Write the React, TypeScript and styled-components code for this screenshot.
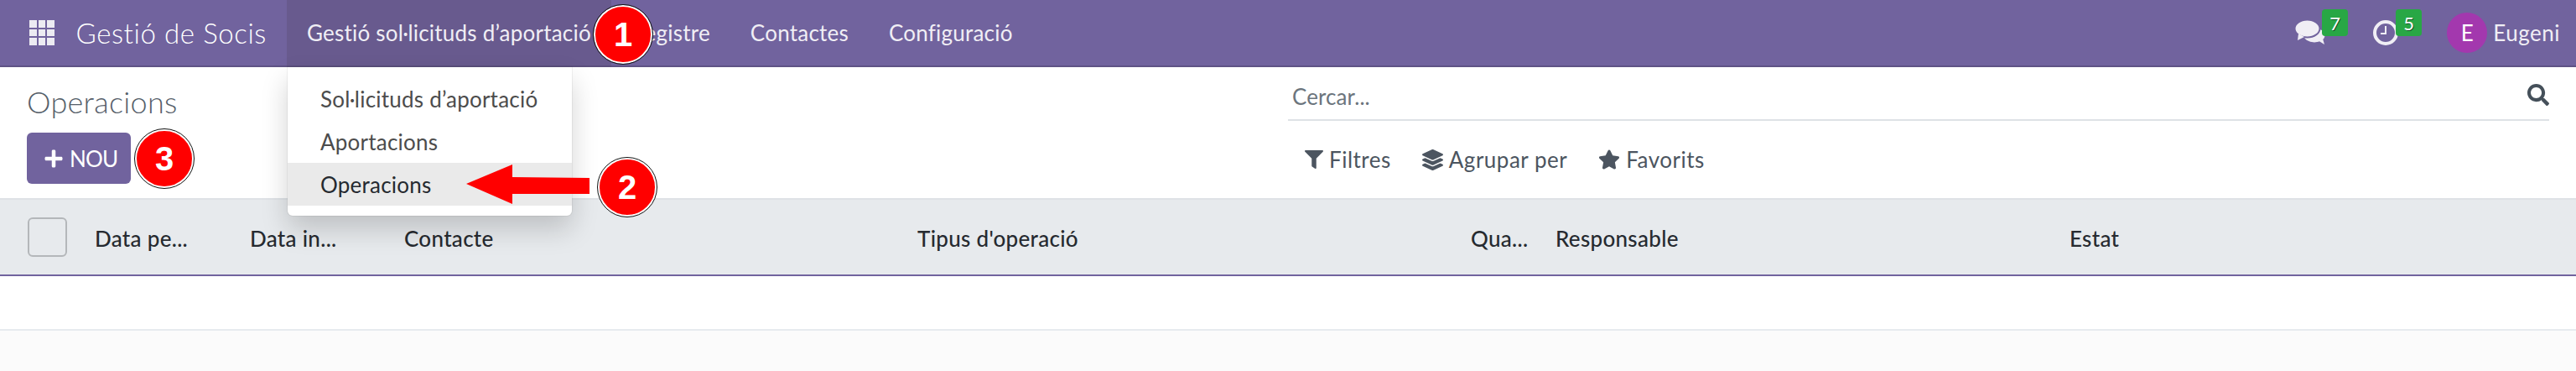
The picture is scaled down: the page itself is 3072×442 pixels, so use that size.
import { createGlobalStyle, styled } from 'styled-components';
import { FaFilter, FaLayerGroup, FaPlus, FaSearch, FaStar } from 'react-icons/fa';

const GlobalStyle = createGlobalStyle`
  html, body {
    margin: 0;
    padding: 0;
    background: #fff;
  }
  * { box-sizing: border-box; }
`;

const Page = styled.div`
  position: relative;
  width: 3072px;
  height: 442px;
  overflow: hidden;
  font-family: Lato, "Noto Sans", sans-serif;
  font-size: 26px;
  background: #fbfbfb;
`;

const NavBar = styled.header`
  display: flex;
  align-items: stretch;
  height: 80px;
  padding-left: 35px;
  background: #71639e;
  border-bottom: 2px solid #5f5385;
  color: #f0eef5;
`;

const AppsGrid = styled.div`
  align-self: center;
  display: grid;
  grid-template-columns: repeat(3, 8.5px);
  grid-auto-rows: 8.5px;
  gap: 2px;
`;

const AppsDot = styled.span`
  background: #ecebf2;
`;

const Brand = styled.div`
  display: flex;
  align-items: center;
  margin-left: 26px;
  width: 251.5px;
  font-size: 33px;
  font-weight: 300;
  letter-spacing: 0.6px;
  color: #fff;
`;

const NavItem = styled.div<{ $active?: boolean }>`
  position: relative;
  display: flex;
  align-items: center;
  padding: 0 24px;
  height: 80px;
  margin-bottom: -2px;
  letter-spacing: 0.22px;
  background: ${p => (p.$active ? '#685a8e' : 'transparent')};
  border-bottom: 2px solid ${p => (p.$active ? '#5b4f7d' : 'transparent')};
`;

const NavRight = styled.div`
  display: flex;
  align-items: center;
  margin-left: auto;
  padding-right: 19px;
`;

const Systray = styled.div<{ $gap: number }>`
  position: relative;
  display: flex;
  align-items: center;
  margin-right: ${p => p.$gap}px;
`;

const Badge = styled.span<{ $left: number }>`
  position: absolute;
  left: ${p => p.$left}px;
  top: -13px;
  width: 31px;
  height: 32px;
  display: flex;
  align-items: center;
  justify-content: center;
  font-size: 22px;
  color: #fff;
  background: #28a745;
  border-radius: 4px;
  text-shadow: 1px 1px 0 #14532a;
`;

const Avatar = styled.span`
  width: 48px;
  height: 48px;
  display: flex;
  align-items: center;
  justify-content: center;
  border-radius: 50%;
  background: #a338ae;
  color: #fff;
  font-size: 26px;
`;

const UserName = styled.span`
  margin-left: 7px;
  letter-spacing: 0.5px;
`;

const DropMenu = styled.div`
  position: absolute;
  left: 1px;
  top: 80px;
  width: 339px;
  padding: 12px 0;
  background: #fff;
  border-radius: 0 0 6px 6px;
  box-shadow: 0 16px 32px rgba(0, 0, 0, 0.175), 0 0 0 1px rgba(0, 0, 0, 0.05);
  z-index: 2;
`;

const DropItem = styled.div<{ $hover?: boolean }>`
  height: 51px;
  display: flex;
  align-items: center;
  padding-left: 39px;
  letter-spacing: 0.22px;
  color: ${p => (p.$hover ? '#262a30' : '#4c4c4c')};
  background: ${p => (p.$hover ? '#eaeaea' : 'transparent')};
`;

const ControlPanel = styled.section`
  display: grid;
  grid-template-columns: 1504px 1504px;
  height: 158px;
  padding-left: 32px;
  background: #fff;
  border-bottom: 2px solid #dee2e6;
`;

const LeftPanel = styled.div`
  display: flex;
  flex-direction: column;
  align-items: flex-start;
`;

const Title = styled.h1`
  margin: 18px 0 0;
  font-size: 36px;
  line-height: 46px;
  font-weight: 300;
  letter-spacing: 0.3px;
  color: #56606a;
`;

const NewButton = styled.button`
  display: flex;
  align-items: center;
  gap: 7px;
  margin-top: 14px;
  width: 124px;
  height: 61px;
  padding: 0 0 0 20px;
  border: 0;
  border-radius: 6px;
  background: #71639e;
  color: #fff;
  font-family: inherit;
  font-size: 26px;
  letter-spacing: -0.8px;
`;

const RightPanel = styled.div`
  display: flex;
  flex-direction: column;
`;

const SearchBar = styled.div`
  display: flex;
  align-items: center;
  justify-content: space-between;
  margin-top: 20px;
  height: 44px;
  padding: 0 0 12px 5px;
  border-bottom: 2px solid #dee2e6;
  color: #6c757d;
  letter-spacing: 0.1px;
`;

const SearchIcon = styled(FaSearch)`
  font-size: 26px;
  color: #45505a;
  margin-bottom: 4px;
`;

const FilterRow = styled.div`
  display: flex;
  gap: 37px;
  margin-top: 30px;
  padding-left: 20px;
  color: #4c5560;
  letter-spacing: 0.5px;
`;

const FilterItem = styled.div`
  display: flex;
  align-items: center;
  gap: 7px;
`;

const TableHead = styled.div`
  display: grid;
  grid-template-columns: 113px 185px 184px 612px 660px 101px 613px 1fr;
  align-items: center;
  height: 91px;
  padding-top: 3px;
  background: #e7eaed;
  border-bottom: 2px solid #71639e;
  color: #262a30;
  font-weight: 500;
  letter-spacing: 0.3px;
`;

const CheckBox = styled.span`
  width: 47px;
  height: 47px;
  margin: -3px 0 0 33px;
  border: 2px solid #b4b7ba;
  border-radius: 6px;
`;

const HeadCell = styled.div`
  white-space: nowrap;
`;

const EmptyRow = styled.div`
  height: 65px;
  background: #fff;
  border-bottom: 2px solid #e7ebef;
`;

const Marker = styled.div<{ $x: number; $y: number }>`
  position: absolute;
  left: ${p => p.$x - 35}px;
  top: ${p => p.$y - 35}px;
  width: 70px;
  height: 70px;
  display: flex;
  align-items: center;
  justify-content: center;
  border-radius: 50%;
  background: #f00;
  border: 2px solid #fff;
  outline: 1.5px solid #111;
  color: #fff;
  font-family: "Liberation Sans", sans-serif;
  font-size: 40px;
  font-weight: 700;
  z-index: 3;
`;

const ArrowSvg = styled.svg`
  position: absolute;
  left: 556px;
  top: 196px;
  z-index: 3;
`;

const apps = Array.from({ length: 9 });

const ChatIcon = () => (
  <svg width="36" height="30" viewBox="0 0 36 30">
    <ellipse cx="23" cy="18" rx="12.5" ry="8.5" fill="#f0eef5" />
    <polygon points="27,24 33,22 35,29" fill="#f0eef5" />
    <ellipse cx="14.5" cy="10" rx="15" ry="10.5" fill="#f0eef5" stroke="#71639e" strokeWidth="2" />
    <polygon points="4,16 11,20 3,24" fill="#f0eef5" />
  </svg>
);

const ClockIcon = () => (
  <svg width="30" height="30" viewBox="0 0 30 30">
    <circle cx="15" cy="15" r="13" fill="none" stroke="#f0eef5" strokeWidth="4" />
    <polyline points="15,7 15,16 9,16" fill="none" stroke="#f0eef5" strokeWidth="2" />
  </svg>
);

const App = () => {
  return (
    <Page>
      <GlobalStyle />
      <NavBar>
        <AppsGrid>
          {apps.map((_, i) => (
            <AppsDot key={i} />
          ))}
        </AppsGrid>
        <Brand>Gestió de Socis</Brand>
        <NavItem $active>
          Gestió sol·licituds d’aportació
          <DropMenu>
            <DropItem>Sol·licituds d’aportació</DropItem>
            <DropItem>Aportacions</DropItem>
            <DropItem $hover>Operacions</DropItem>
          </DropMenu>
        </NavItem>
        <NavItem>Registre</NavItem>
        <NavItem>Contactes</NavItem>
        <NavItem>Configuració</NavItem>
        <NavRight>
          <Systray $gap={57}>
            <ChatIcon />
            <Badge $left={32}>7</Badge>
          </Systray>
          <Systray $gap={58}>
            <ClockIcon />
            <Badge $left={27}>5</Badge>
          </Systray>
          <Avatar>E</Avatar>
          <UserName>Eugeni</UserName>
        </NavRight>
      </NavBar>

      <ControlPanel>
        <LeftPanel>
          <Title>Operacions</Title>
          <NewButton>
            <FaPlus size={24} />
            NOU
          </NewButton>
        </LeftPanel>
        <RightPanel>
          <SearchBar>
            Cercar...
            <SearchIcon />
          </SearchBar>
          <FilterRow>
            <FilterItem>
              <FaFilter size={22} />
              Filtres
            </FilterItem>
            <FilterItem>
              <FaLayerGroup size={25} />
              Agrupar per
            </FilterItem>
            <FilterItem>
              <FaStar size={26} />
              Favorits
            </FilterItem>
          </FilterRow>
        </RightPanel>
      </ControlPanel>

      <TableHead>
        <CheckBox />
        <HeadCell>Data pe...</HeadCell>
        <HeadCell>Data in...</HeadCell>
        <HeadCell>Contacte</HeadCell>
        <HeadCell>Tipus d'operació</HeadCell>
        <HeadCell>Qua...</HeadCell>
        <HeadCell>Responsable</HeadCell>
        <HeadCell>Estat</HeadCell>
      </TableHead>
      <EmptyRow />

      <Marker $x={743} $y={41}>1</Marker>
      <Marker $x={748} $y={223}>2</Marker>
      <Marker $x={196} $y={189}>3</Marker>
      <ArrowSvg width="148" height="48" viewBox="0 0 148 48">
        <polygon points="0,23 55,0 55,15 147,16 147,35 55,35 55,47" fill="#f00" />
      </ArrowSvg>
    </Page>
  );
};

export default App;
